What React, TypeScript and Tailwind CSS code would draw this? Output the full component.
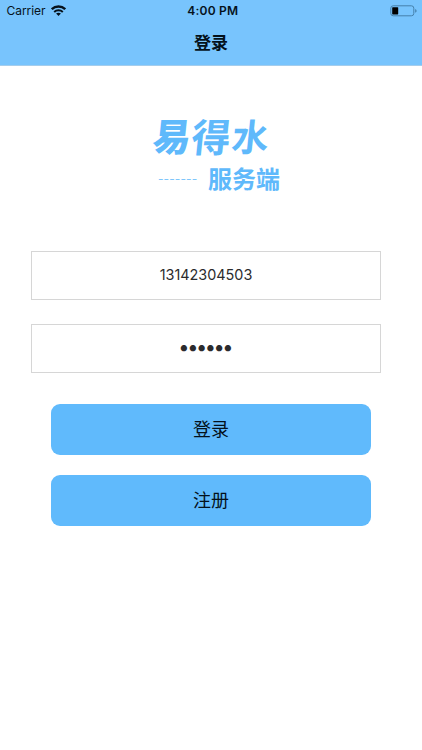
import type { ReactNode } from "react";

function WifiIcon() {
  return (
    <svg className="-mt-[2px]" width="15" height="11" viewBox="0 0 15 11" fill="none">
      <path d="M.8 4.2C4.5.6 10.5.6 14.2 4.2" stroke="#06121c" strokeWidth="2.4" />
      <path d="M3.2 6.9c2.4-2.2 6.2-2.2 8.6 0" stroke="#06121c" strokeWidth="2" />
      <path d="M5.1 8.6c1.3-1.2 3.5-1.2 4.8 0L7.5 11z" fill="#06121c" />
    </svg>
  );
}

function BatteryIcon() {
  return (
    <svg width="28" height="12" viewBox="0 0 28 12" fill="none">
      <rect x="0.8" y="0.8" width="23" height="10" rx="2.4" stroke="#4580ab" strokeWidth="1" />
      <rect x="2.2" y="2.2" width="6" height="7.2" rx="0.6" fill="#000" />
      <path d="M25.2 4v3.8c1.9-.8 1.9-3 0-3.8z" fill="#4580ab" />
    </svg>
  );
}

function StatusBar() {
  return (
    <div className="grid h-[22px] grid-cols-3 items-center pl-[6.5px] pr-[4px] text-[12px] text-[#06121c]">
      <div className="flex items-center gap-[5px]">
        <span className="w-[39.5px] whitespace-nowrap tracking-[-0.05px]">Carrier</span>
        <WifiIcon />
      </div>
      <span className="pl-[1px] text-center font-semibold tracking-[0.2px]">4:00 PM</span>
      <div className="flex justify-end">
        <BatteryIcon />
      </div>
    </div>
  );
}

function Logo() {
  return (
    <div className="ml-[153px] mt-[46px] w-[130px] text-[#5fb9fb]">
      <div className="flex h-[48px] -skew-x-6 items-center gap-[1px] font-['Noto_Sans_CJK_SC',sans-serif] text-[38px] font-bold leading-none">
        <span className="-mt-[2px] font-black">易</span>
        <span className="-mt-[2px] text-[39px]">得</span>
        <span className="-mt-[1px] text-[37px]">水</span>
      </div>
      <div className="flex items-center pt-[6px]">
        <span className="ml-[5px] mt-[2px] w-[40px] whitespace-nowrap text-[12px] leading-none tracking-[0.1px] opacity-80">-------</span>
        <span className="ml-[10px] whitespace-nowrap font-['Noto_Sans_CJK_SC',sans-serif] text-[24px] font-bold leading-none">服务端</span>
      </div>
    </div>
  );
}

function Field({ children }: { children: ReactNode }) {
  return (
    <div className="flex h-[49px] w-[350px] items-center justify-center border border-[#d6d6d6] text-[#2b2b2d]">
      {children}
    </div>
  );
}

function Button({ label }: { label: string }) {
  return (
    <button className="h-[51px] w-[320px] rounded-[9px] bg-[#60bafc] pt-[1px] text-[18px] text-[#04111b]">{label}</button>
  );
}

export default function App() {
  return (
    <div className="h-[750px] w-[422px] overflow-hidden bg-white font-[Inter,'Noto_Sans_CJK_SC',sans-serif]">
      <header className="h-[66px] border-b border-[#a5cdec] bg-[#78c4fd]">
        <StatusBar />
        <h1 className="flex h-[44px] items-center justify-center text-[17px] font-bold text-[#04111b]">登录</h1>
      </header>
      <Logo />
      <div className="ml-[31px] mt-[61px] flex flex-col gap-[24px]">
        <Field>
          <span className="-mt-[2px] text-[14.4px]">13142304503</span>
        </Field>
        <Field>
          <span className="-mt-[4px] pr-[2.5px] text-[20px] leading-none tracking-[-2.45px]">••••••</span>
        </Field>
      </div>
      <div className="ml-[51px] mt-[30.5px] flex flex-col gap-[20px]">
        <Button label="登录" />
        <Button label="注册" />
      </div>
    </div>
  );
}
